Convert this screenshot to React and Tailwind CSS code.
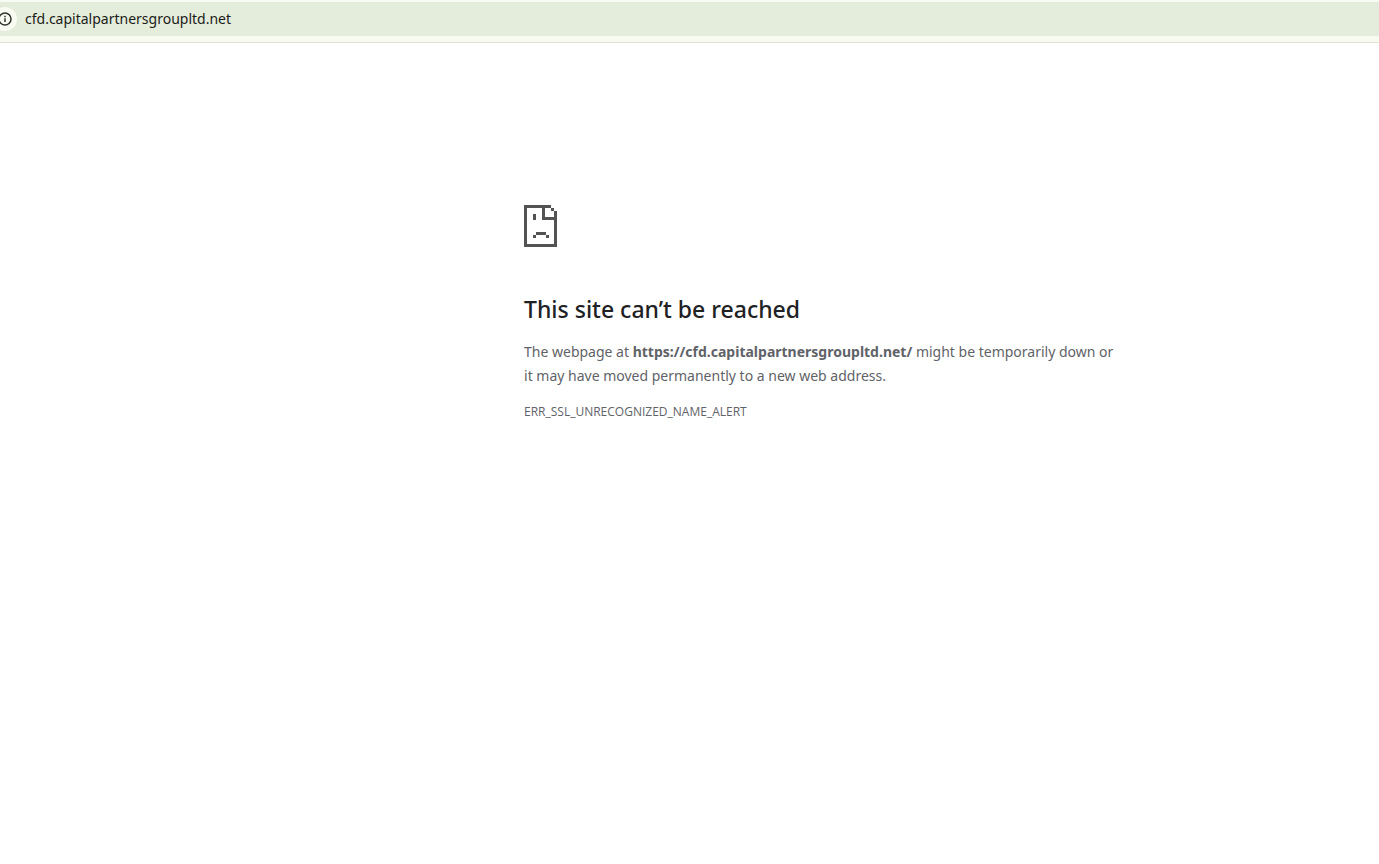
const SITE = "cfd.capitalpartnersgroupltd.net";

const InfoIcon = () => (
  <svg width="14" height="14" viewBox="0 0 14 14" fill="none" aria-hidden="true">
    <circle cx="7" cy="7" r="6" stroke="#30332e" strokeWidth="1.5" />
    <path d="M7 6.2V10" stroke="#30332e" strokeWidth="1.5" />
    <path d="M7 3.8V5.2" stroke="#30332e" strokeWidth="1.5" />
  </svg>
);

// Sad page icon, drawn in 3px blocks
const SadPageIcon = () => (
  <svg
    width="33"
    height="42"
    viewBox="0 0 33 42"
    fill="#535353"
    shapeRendering="crispEdges"
    aria-hidden="true"
  >
    <path
      d="M0 0H27V3H21V12H30V6H33V42H0ZM3 3V39H30V15H18V3Z"
      fillRule="evenodd"
    />
    <path d="M27 3H30V6H27Z" />
    <path d="M9 9H12V15H9Z" />
    <path d="M12 27H22V30H12ZM9 30H12V33H9ZM22 30H25V33H22Z" />
  </svg>
);

const AddressBar = () => (
  <header className="border-b border-[#dfe4d7] bg-[#f8fbf1] pt-0.5 pb-1.5">
    <form
      onSubmit={(e) => e.preventDefault()}
      className="flex h-[34px] items-center gap-2 bg-[#e4eddb]"
    >
      <button
        type="button"
        aria-label="View site information"
        className="-ml-[7px] flex size-6 items-center justify-center rounded-full bg-[#f8fbf1]"
      >
        <InfoIcon />
      </button>
      <input
        type="text"
        aria-label="Address"
        defaultValue={SITE}
        spellCheck={false}
        className="min-w-0 flex-1 bg-transparent text-sm text-[#1b1c18] outline-none"
      />
    </form>
  </header>
);

const App = () => {
  return (
    <div className="min-h-screen bg-white font-['Noto_Sans','Open_Sans',sans-serif]">
      <AddressBar />

      <main className="pt-[162px] pr-4 pl-[38%] text-[#5f6368]">
        <div className="max-w-[600px]">
          <SadPageIcon />
          <h1 className="mt-12 text-[23px] leading-7 font-medium text-[#202124]">
            This site can’t be reached
          </h1>
          <p className="mt-[17px] text-sm leading-6">
            The webpage at <strong>{`https://${SITE}/`}</strong> might be
            temporarily down or
            <br />
            it may have moved permanently to a new web address.
          </p>
          {/* Error code */}
          <p className="mt-3 font-['Open_Sans',sans-serif] text-xs leading-6">
            ERR_SSL_UNRECOGNIZED_NAME_ALERT
          </p>
        </div>
      </main>
    </div>
  );
};

export default App;
